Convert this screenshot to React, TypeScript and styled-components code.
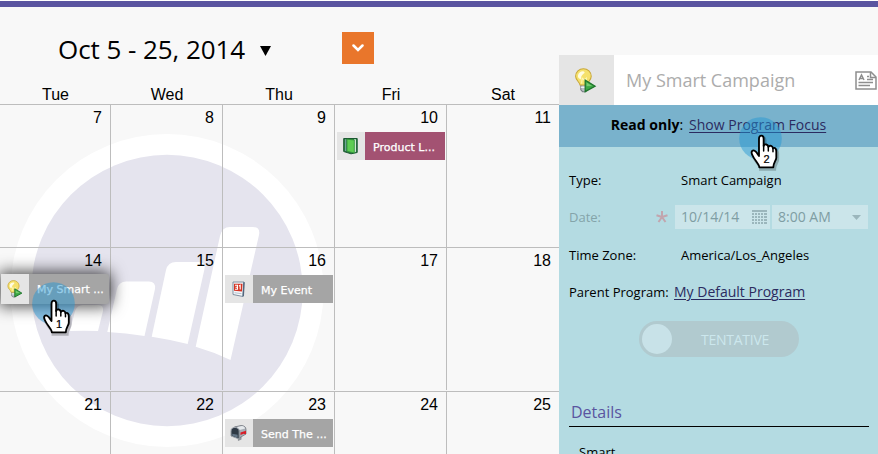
import React from "react";
import styled, { createGlobalStyle } from "styled-components";

const GlobalStyle = createGlobalStyle`
  * { box-sizing: border-box; }
  body { margin: 0; background: #f8f8f8; overflow: hidden; }
`;

const sans = `"Open Sans", "Noto Sans", sans-serif`;

const Page = styled.div`
  height: 454px;
  display: flex;
  flex-direction: column;
  overflow: hidden;
  background: #f8f8f8;
  color: #000;
  font-family: ${sans};
`;
const TopBar = styled.div`
  flex: 0 0 7px;
  border-top: 1px solid #fff;
  background: #5a54a0;
`;
const Main = styled.main`
  flex: 1;
  display: flex;
  min-height: 0;
`;
const Calendar = styled.section`
  width: 559px;
  display: flex;
  flex-direction: column;
`;
const Toolbar = styled.div`
  height: 77px;
  display: flex;
  align-items: center;
  padding: 7px 0 0 58px;
`;
const RangeButton = styled.button`
  width: 284px;
  padding: 0;
  border: 0;
  background: none;
  display: flex;
  align-items: center;
  font: 26px/36px ${sans};
  letter-spacing: -0.06px;
  color: #000;
  white-space: nowrap;
`;
const Caret = styled.svg`
  margin: 4px 0 0 15px;
`;
const ViewButton = styled.button`
  width: 32px;
  height: 32px;
  margin-top: -2px;
  padding: 0;
  border: 0;
  background: #e9762b;
  display: flex;
  align-items: center;
  justify-content: center;
`;
const columns = "111px repeat(4, 112px)";
const Weekdays = styled.div`
  display: grid;
  grid-template-columns: ${columns};
  height: 21px;
  border-bottom: 1px solid #bdbdbd;
  font: 16px/22px "Liberation Sans", Arial, sans-serif;
  text-align: center;
`;
const Grid = styled.div`
  position: relative;
  flex: 1;
  overflow: hidden;
`;
const Watermark = styled.svg`
  position: absolute;
  left: 0;
  top: 0;
`;
const Week = styled.div<{ $height: number; $gap: number }>`
  position: relative;
  display: grid;
  grid-template-columns: ${columns};
  height: ${(p) => p.$height}px;
  padding-bottom: ${(p) => p.$gap}px;
  border-bottom: 1px solid #bdbdbd;
`;
const Day = styled.div`
  padding: 4px 0 0 2px;
  border-right: 1px solid #bdbdbd;
  &:last-child { border-right: 0; }
`;
const DayNumber = styled.div`
  height: 23px;
  padding-right: 8px;
  text-align: right;
  font: 16px/18px "Liberation Sans", Arial, sans-serif;
`;
const Entry = styled.div<{ $color: string; $lifted?: boolean }>`
  display: flex;
  width: 108px;
  height: ${(p) => (p.$lifted ? 30 : 28)}px;
  margin: ${(p) => (p.$lifted ? "-1px 0 0 -1px" : "0")};
  border-radius: ${(p) => (p.$lifted ? "0 3px 3px 0" : "0")};
  box-shadow: ${(p) => (p.$lifted ? "0 0 16px 2px rgba(0,0,0,.75)" : "none")};
  background: ${(p) => p.$color};
`;
const EntryIcon = styled.div`
  flex: 0 0 28px;
  background: #e5e5e5;
  display: flex;
  align-items: center;
  justify-content: center;
`;
const EntryLabel = styled.div<{ $lifted?: boolean }>`
  padding-left: 8px;
  align-self: center;
  padding-top: ${(p) => (p.$lifted ? 2 : 4)}px;
  color: #fff;
  font: 11px/16px "DejaVu Sans", Verdana, sans-serif;
  -webkit-text-stroke: 0.25px #fff;
  white-space: nowrap;
`;
const Pointer = styled.svg<{ $x: number; $y: number }>`
  position: absolute;
  left: ${(p) => p.$x}px;
  top: ${(p) => p.$y}px;
  overflow: visible;
  pointer-events: none;
`;
const Panel = styled.aside`
  flex: 1;
  margin-top: 48px;
  display: flex;
  flex-direction: column;
  background: #b4dbe2;
  min-width: 0;
`;
const PanelHeader = styled.header`
  flex: 0 0 50px;
  display: flex;
  align-items: center;
  background: #fff;
`;
const PanelIcon = styled.div`
  width: 55px;
  height: 50px;
  padding-right: 2px;
  background: #e5e5e5;
  display: flex;
  align-items: center;
  justify-content: center;
`;
const PanelTitle = styled.h1`
  flex: 1;
  margin: 0 0 0 12px;
  font: 18px/24px ${sans};
  color: #acacac;
`;
const Banner = styled.div`
  flex: 0 0 42px;
  display: flex;
  align-items: center;
  justify-content: center;
  gap: 6px;
  padding-bottom: 2px;
  background: #79b2cc;
  font-size: 14px;
  line-height: 20px;
`;
const Link = styled.a`
  color: #2b2b60;
  font-size: 14px;
  text-decoration: underline;
  text-underline-offset: 2px;
  text-decoration-thickness: 1px;
`;
const Fields = styled.div`
  padding: 15px 0 0 10px;
`;
const Field = styled.div<{ $height: number; $muted?: boolean }>`
  display: flex;
  align-items: center;
  height: ${(p) => p.$height}px;
  font-size: 13px;
  line-height: 18px;
  color: ${(p) => (p.$muted ? "#84a4a9" : "#000")};
  white-space: nowrap;
`;
const FieldLabel = styled.div<{ $width: number }>`
  width: ${(p) => p.$width}px;
`;
const Input = styled.div<{ $width: number }>`
  display: flex;
  align-items: center;
  justify-content: space-between;
  width: ${(p) => p.$width}px;
  height: 24px;
  margin-right: 2px;
  padding: 0 2px 0 6px;
  background: #cbe5ea;
  font-size: 14px;
  color: #7f9da3;
`;
const Required = styled.svg`
  margin-right: 7px;
`;
const Toggle = styled.div`
  width: 160px;
  height: 36px;
  margin: 11px 0 0 70px;
  padding: 3px;
  border-radius: 18px;
  background: #b1cacf;
  display: flex;
  align-items: center;
  color: #cce7ed;
  font-size: 14px;
  letter-spacing: -0.25px;
`;
const Knob = styled.span`
  width: 30px;
  height: 30px;
  border-radius: 50%;
  background: #c8e2e8;
  margin-right: 29px;
`;
const SectionTitle = styled.h2`
  width: 300px;
  height: 30px;
  margin: 40px 0 0;
  padding-left: 2px;
  border-bottom: 1px solid #000;
  font: 16px/30px ${sans};
  color: #5a54a0;
`;
const Detail = styled.div`
  padding: 16px 0 0 10px;
  font-size: 13px;
  line-height: 18px;
`;

const Bulb = ({ size }: { size: number }) => (
  <svg width={size} height={size} viewBox="0 0 24 24">
    <path d="M7.5 16h6v4.5l-1.2 2.2H9.2L7.5 21z" fill="#b9bec5" stroke="#777c83" />
    <path d="M7.5 18.5h5" stroke="#fff" />
    <path d="M2.5 8a7.5 7.3 0 1 1 15 0c0 4-3.5 5-3.7 8.3H6.7C6.3 13 2.5 12 2.5 8z" fill="#f5e16c" stroke="#c9a83a" />
    <path d="M4.7 7.5c.5-3 3-4.6 5.6-4.2 1.5.3.8 1.6-.2 2.3-2 1.5-2.4 3.4-2.6 5.4-1.6-.8-3-1.8-2.8-3.5z" fill="#fffce0" />
    <path d="M8.3 15l.5-5.3 2 1.8 2-1.8-.2 5.3" fill="none" stroke="#fff8b5" />
    <path d="M11.7 11.7v11l9.5-5.2z" fill="#3ca744" stroke="#1d742b" strokeWidth="1.2" />
    <path d="M13 14v3.5l5.5-.2z" fill="#76cb70" />
  </svg>
);
const Book = () => (
  <svg width="16" height="18" viewBox="0 0 16 18">
    <path d="M.7 1.5h13.5v14L8 16.800l-7.300-2.300z" fill="#2b7543" stroke="#1b5931" />
    <path d="M2.700 2.200v11.800" stroke="#79a9a4" strokeWidth="1.200" />
    <path d="M11.200 2.200h1.700v12.600l-1.700.7z" fill="#e5f5e4" />
    <path d="M4 2.200l7.300.8v13L4 14.200z" fill="#5ecc53" stroke="#2f9337" strokeWidth=".8" />
  </svg>
);
const EventIcon = () => (
  <svg width="18" height="18" viewBox="0 0 18 18">
    <path d="M3 2h11l-1 14.500L3 14.500z" fill="#f4f8fb" stroke="#8090a0" />
    <path d="M14 2.300L13.200 16.300" stroke="#53677e" strokeWidth="1.500" />
    <path d="M4 3.800h8.500L12 11.500 4 10.700z" fill="#d53322" />
    <path d="M5 5.300h2.500v4H5M5.500 7.200h2M9 6l1.200-.8v4.300" fill="none" stroke="#fff" strokeWidth="1.100" />
    <path d="M4.500 12.700l7 1" stroke="#b6c1cc" />
  </svg>
);
const Mailbox = () => (
  <svg width="18" height="18" viewBox="0 0 18 18">
    <path d="M7.500 12l4-2v5.500l-3.500 1.500z" fill="#8e9298" />
    <path d="M4.500 3L11 1.500c3 0 5 1.500 5 4V10L9.300 14V7C8.700 4.500 6.500 3 4.500 3z" fill="#a7adb5" stroke="#656c74" strokeWidth=".7" />
    <path d="M6 3.200l6-1.200c1.500.2 2.700 1 3.200 2.500L9.500 6C8.700 4.500 7.500 3.500 6 3.200z" fill="#e5e9ec" />
    <path d="M1 7c0-5 8-4.500 8.200 0v8L1 12z" fill="#2f3a45" stroke="#9aa1a9" />
    <path d="M2.300 9.800l5.300 1v3l-5.300-2z" fill="#647687" />
    <path d="M10.500 8.500L16 6.700v3.500l-2.500-.5-3 1.300z" fill="#d81d27" />
  </svg>
);

const pointerPath =
  "M33 69V17C33 5 47 5 47 17V39C50 31 60 34 61 42C66 35 74 39 75 46C82 42 85 49 85 56V74C85 82 76 89 76 103H34C35 94 20 83 13 66C7 54 15 50 21 54C26 57 28 62 33 69Z";
const Click = ({ x, y, label, dx = 0 }: { x: number; y: number; label: string; dx?: number }) => (
  <Pointer $x={x} $y={y} width="43" height="43" viewBox="0 0 43 43">
    <circle cx="21.5" cy="21.5" r="21.3" fill="#2497d3" fillOpacity=".48" />
    <g transform={`translate(${9 + dx} 16) scale(.333)`}>
      <path d={pointerPath} transform="translate(4 6)" fill="none" stroke="#000" strokeOpacity=".22" strokeWidth="9" />
      <path d={pointerPath} fill="#fff" stroke="#000" strokeWidth="5.5" strokeLinejoin="round" />
      <path d="M47 37V54M61 42V54M75 46V56" stroke="#000" strokeWidth="4.5" strokeLinecap="round" />
      <text x="56" y="89" textAnchor="middle" fontFamily="Liberation Sans, Arial, sans-serif" fontSize="33" stroke="#000" strokeWidth=".7">{label}</text>
    </g>
  </Pointer>
);

type CalendarEntry = { icon: React.ReactNode; text: string; color: string; lifted?: boolean };
const entries: Record<number, CalendarEntry> = {
  10: { icon: <Book />, text: "Product L...", color: "#a35272" },
  14: { icon: <Bulb size={18} />, text: "My Smart ...", color: "#a5a5a5", lifted: true },
  16: { icon: <EventIcon />, text: "My Event", color: "#a5a5a5" },
  23: { icon: <Mailbox />, text: "Send The ...", color: "#a5a5a5" },
};
const weeks = [
  { start: 7, height: 143, gap: 0 },
  { start: 14, height: 144, gap: 1 },
  { start: 21, height: 144, gap: 0 },
];

export default function App() {
  return (
    <Page>
      <GlobalStyle />
      <TopBar />
      <Main>
        <Calendar>
          <Toolbar>
            <RangeButton>
              Oct 5 - 25, 2014
              <Caret width="11" height="10"><path d="M0 0h11L5.5 10z" /></Caret>
            </RangeButton>
            <ViewButton aria-label="View options">
              <svg width="12" height="8" viewBox="0 0 12 8">
                <path d="M1.5 1.5L6 6l4.5-4.500" fill="none" stroke="#fff" strokeWidth="2.5" strokeLinecap="round" />
              </svg>
            </ViewButton>
          </Toolbar>
          <Weekdays>
            {["Tue", "Wed", "Thu", "Fri", "Sat"].map((d) => <span key={d}>{d}</span>)}
          </Weekdays>
          <Grid>
            <Watermark width="559" height="349" viewBox="0 105 559 349">
              <circle cx="167" cy="290.5" r="156.5" fill="#fff" />
              <circle cx="167" cy="290.5" r="135.7" fill="#e5e4ee" />
              <g fill="#fff">
                <path d="M70 331L75 311Q77 305 83 305H98Q104 305 103 311L98 331Q83 330.5 70 331Z" />
                <path d="M107.3 332L117 289Q119 281.5 126 281.5H149Q156 281.5 155 289L144.5 336Q126 333 107.3 332Z" />
                <path d="M151.7 336.7L166 270Q168 262 176 262H199Q206 262 204.5 269L187.7 344Q170 339.5 151.7 336.7Z" />
                <path d="M195.7 346.7L220 236Q222 227 230 227H253Q260.5 227 259 235L230.5 360Q214 352 195.7 346.7Z" />
              </g>
            </Watermark>
            {weeks.map((week) => (
              <Week key={week.start} $height={week.height} $gap={week.gap}>
                {[0, 1, 2, 3, 4].map((i) => {
                  const day = week.start + i;
                  const entry = entries[day];
                  return (
                    <Day key={day}>
                      <DayNumber>{day}</DayNumber>
                      {entry && (
                        <Entry $color={entry.color} $lifted={entry.lifted}>
                          <EntryIcon>{entry.icon}</EntryIcon>
                          <EntryLabel $lifted={entry.lifted}>{entry.text}</EntryLabel>
                        </Entry>
                      )}
                    </Day>
                  );
                })}
              </Week>
            ))}
          </Grid>
        </Calendar>
        <Panel>
          <PanelHeader>
            <PanelIcon><Bulb size={25} /></PanelIcon>
            <PanelTitle>My Smart Campaign</PanelTitle>
            <svg width="23" height="19" viewBox="0 0 23 19" fill="none" stroke="#8e8e8e" strokeWidth="1.5">
              <path d="M1 1H16L21 6V18H1Z" />
              <path d="M15.5 1V6.5H21M3.5 11.5H18M3.5 14.5H15M12 8.5H18M12 5.5H14" />
              <path d="M4 9L6.5 4L9 9M5 7.5H8" />
            </svg>
          </PanelHeader>
          <Banner>
            <span><b>Read only</b>:</span>
            <Link>Show Program Focus</Link>
          </Banner>
          <Fields>
            <Field $height={36}><FieldLabel $width={112}>Type:</FieldLabel>Smart Campaign</Field>
            <Field $height={38} $muted>
              <FieldLabel $width={87}>Date:</FieldLabel>
              <Required width="12" height="12" viewBox="0 0 12 12">
                <path d="M6 6V0M6 6L.5 4.2M6 6L2.5 11M6 6L9.5 11M6 6L11.5 4.2" stroke="#c2a5ae" strokeWidth="2" />
              </Required>
              <Input $width={95}>
                10/14/14
                <svg width="16" height="15" viewBox="0 0 16 15" fill="#9bb6bc" shapeRendering="crispEdges">
                  <path d="M0 0H15V2H0Z" />
                  {[3, 6, 9, 12].map((y) => [0, 3, 6, 9, 12].map((x) => (
                    <rect key={`${x}-${y}`} x={x} y={y} width={x === 12 ? 3 : 2} height="2" />
                  )))}
                </svg>
              </Input>
              <Input $width={96}>
                8:00 AM
                <svg width="16" height="5" viewBox="0 0 16 5"><path d="M2 0H11L6.5 5Z" fill="#9bb6bc" /></svg>
              </Input>
            </Field>
            <Field $height={38}><FieldLabel $width={112}>Time Zone:</FieldLabel>America/Los_Angeles</Field>
            <Field $height={36}>
              <FieldLabel $width={105}>Parent Program:</FieldLabel>
              <Link>My Default Program</Link>
            </Field>
            <Toggle><Knob />TENTATIVE</Toggle>
            <SectionTitle>Details</SectionTitle>
            <Detail>Smart</Detail>
          </Fields>
        </Panel>
      </Main>
      <Click x={31.5} y={282} label="1" dx={-0.5} />
      <Click x={738.5} y={117} label="2" />
    </Page>
  );
}
